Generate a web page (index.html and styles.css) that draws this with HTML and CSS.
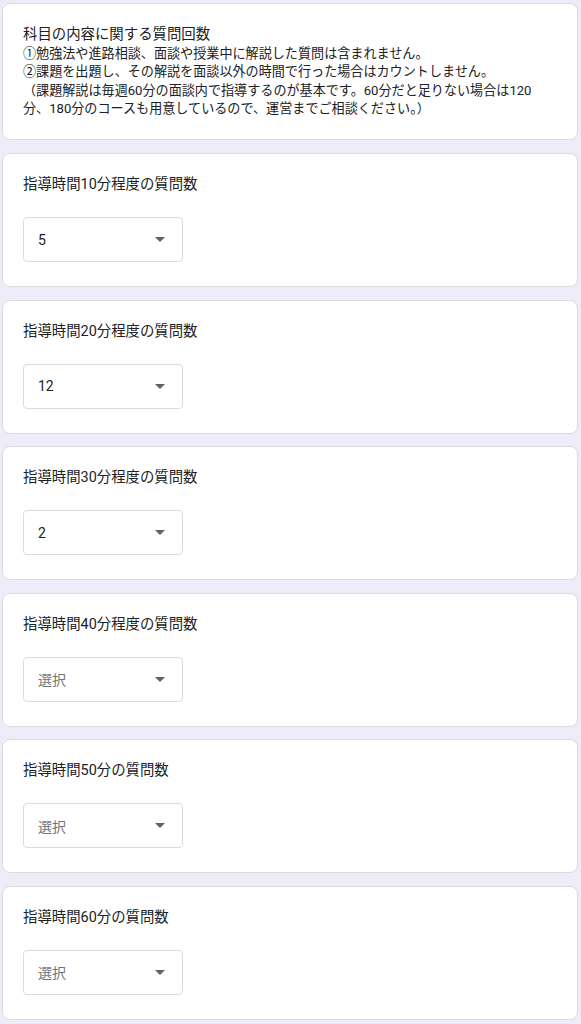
FILE: index.html
```html
<!DOCTYPE html>
<html lang="ja">
<head>
  <meta charset="UTF-8">
  <meta name="viewport" content="width=device-width, initial-scale=1.0">
  <title>質問回数</title>
  <link rel="stylesheet" href="styles.css">
</head>
<body>

<div class="form">
  <!-- 説明 -->
  <div class="card intro">
    <div class="intro-title">科目の内容に関する質問回数</div>
    <p class="desc">①勉強法や進路相談、面談や授業中に解説した質問は含まれません。<br>②課題を出題し、その解説を面談以外の時間で行った場合はカウントしません。<br>（課題解説は毎週60分の面談内で指導するのが基本です。60分だと足りない場合は120分、180分のコースも用意しているので、運営までご相談ください。）</p>
  </div>

  <!-- 質問 -->
  <div class="card question">
    <div class="q-title">指導時間10分程度の質問数</div>
    <div class="dropdown"><span class="value">5</span><span class="arrow"></span></div>
  </div>

  <div class="card question">
    <div class="q-title">指導時間20分程度の質問数</div>
    <div class="dropdown"><span class="value">12</span><span class="arrow"></span></div>
  </div>

  <div class="card question">
    <div class="q-title">指導時間30分程度の質問数</div>
    <div class="dropdown"><span class="value">2</span><span class="arrow"></span></div>
  </div>

  <div class="card question">
    <div class="q-title">指導時間40分程度の質問数</div>
    <div class="dropdown"><span class="value placeholder">選択</span><span class="arrow"></span></div>
  </div>

  <div class="card question">
    <div class="q-title">指導時間50分の質問数</div>
    <div class="dropdown"><span class="value placeholder">選択</span><span class="arrow"></span></div>
  </div>

  <div class="card question">
    <div class="q-title">指導時間60分の質問数</div>
    <div class="dropdown"><span class="value placeholder">選択</span><span class="arrow"></span></div>
  </div>
</div>

</body>
</html>
```

FILE: styles.css
```css
/* 共通 */
body {
  margin: 0;
  padding: 0;
  background-color: #f0ebf8;
  font-family: Roboto, 'Noto Sans CJK JP', sans-serif;
  font-size: 14px;
  color: #202124;
}

.form {
  margin: 0 3px 0 2px;
  padding-top: 3px;
}

.card {
  background-color: #ffffff;
  border: 1px solid #dadce0;
  border-radius: 8px;
  box-sizing: border-box;
  margin-bottom: 12.6px;
}

/* 説明カード */
.intro {
  height: 137px;
  margin-bottom: 13px;
  padding: 21px 20px 0 20px;
}

.intro-title {
  font-size: 14.4px;
  line-height: 20px;
}

.desc {
  margin: 0;
  font-size: 13.1px;
  line-height: 18.3px;
  max-width: 512px;
}

/* 質問カード */
.question {
  height: 134px;
  padding: 21px 20px 0 20px;
}

.q-title {
  font-size: 14.4px;
  line-height: 20px;
  height: 20px;
  margin-bottom: 22px;
}

.dropdown {
  width: 160px;
  height: 45px;
  box-sizing: border-box;
  border: 1px solid #dadce0;
  border-radius: 4px;
  display: flex;
  align-items: center;
  justify-content: space-between;
  padding: 0 17px 0 14px;
}

.value {
  font-size: 14px;
}

.placeholder {
  color: #70757a;
}

.arrow {
  width: 0;
  height: 0;
  border-left: 5px solid transparent;
  border-right: 5px solid transparent;
  border-top: 5px solid #5f6368;
}
```
